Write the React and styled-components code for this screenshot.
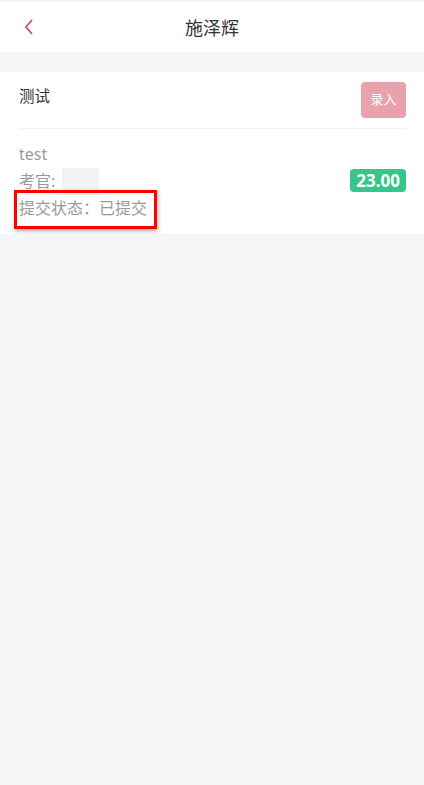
import React from "react"
import styled, { createGlobalStyle } from "styled-components"

const GlobalStyle = createGlobalStyle`
  html, body {
    margin: 0;
    padding: 0;
    background: #f5f6f8;
    font-family: "Noto Sans", "Noto Sans CJK SC", sans-serif;
  }
  #root {
    min-height: 785px;
    padding-top: 2px;
  }
`

const Header = styled.div`
  height: 50px;
  background: #fff;
  display: flex;
  align-items: center;
  justify-content: center;
  position: relative;
`

const BackButton = styled.div`
  position: absolute;
  left: 23px;
  top: 0;
  height: 50px;
  display: flex;
  align-items: center;
`

const Title = styled.div`
  font-size: 18px;
  color: #333;
  font-weight: 400;
`

const Card = styled.div`
  margin-top: 20px;
  background: #fff;
  padding: 0 18px 0 19px;
`

const CardHead = styled.div`
  display: flex;
  justify-content: space-between;
  align-items: center;
  padding: 10px 0 10px;
  border-bottom: 1px solid #f2f2f2;
`

const CardTitle = styled.div`
  font-size: 15.5px;
  color: #333;
  align-self: flex-start;
  margin-top: 2px;
`

const EntryButton = styled.button`
  width: 45px;
  height: 36px;
  border: none;
  border-radius: 4px;
  background: #e9a2ac;
  color: #fff;
  font-size: 13px;
  line-height: 34px;
  font-family: inherit;
  padding: 0 0 2px;
`

const CardBody = styled.div`
  display: flex;
  justify-content: space-between;
  align-items: center;
  padding: 12px 0 12px;
  position: relative;
`

const InfoList = styled.div`
  display: flex;
  flex-direction: column;
`

const InfoLine = styled.div`
  font-size: 16px;
  line-height: 27px;
  height: 27px;
  color: #9a9a9a;
  display: flex;
  align-items: center;
  white-space: pre;
`

const Avatar = styled.span`
  display: inline-block;
  width: 37px;
  height: 27px;
  margin-left: 3px;
  background: #f2f3f4;
`

const Score = styled.div`
  background: #34c68a;
  color: #fff;
  font-weight: 700;
  font-size: 17px;
  border-radius: 4px;
  padding: 0 6px;
  height: 23px;
  line-height: 23px;
  margin-top: -2px;
`

const Highlight = styled.div`
  position: absolute;
  left: -5px;
  top: 61px;
  width: 137px;
  height: 33px;
  border: 3px solid #ff0000;
  box-shadow: 1px 2px 4px rgba(0, 0, 0, 0.35);
  pointer-events: none;
`

export default function App() {
  return (
    <>
      <GlobalStyle />
      <Header>
        <BackButton>
          <svg width="12" height="18" viewBox="0 0 12 18">
            <path d="M9 2 L3 9 L9 16" fill="none" stroke="#d9485f" strokeWidth="1.8" />
          </svg>
        </BackButton>
        <Title>施泽辉</Title>
      </Header>
      <Card>
        <CardHead>
          <CardTitle>测试</CardTitle>
          <EntryButton>录入</EntryButton>
        </CardHead>
        <CardBody>
          <InfoList>
            <InfoLine>test</InfoLine>
            <InfoLine>
              {"考官: "}<Avatar />
            </InfoLine>
            <InfoLine>提交状态：已提交</InfoLine>
          </InfoList>
          <Score>23.00</Score>
          <Highlight />
        </CardBody>
      </Card>
    </>
  )
}
